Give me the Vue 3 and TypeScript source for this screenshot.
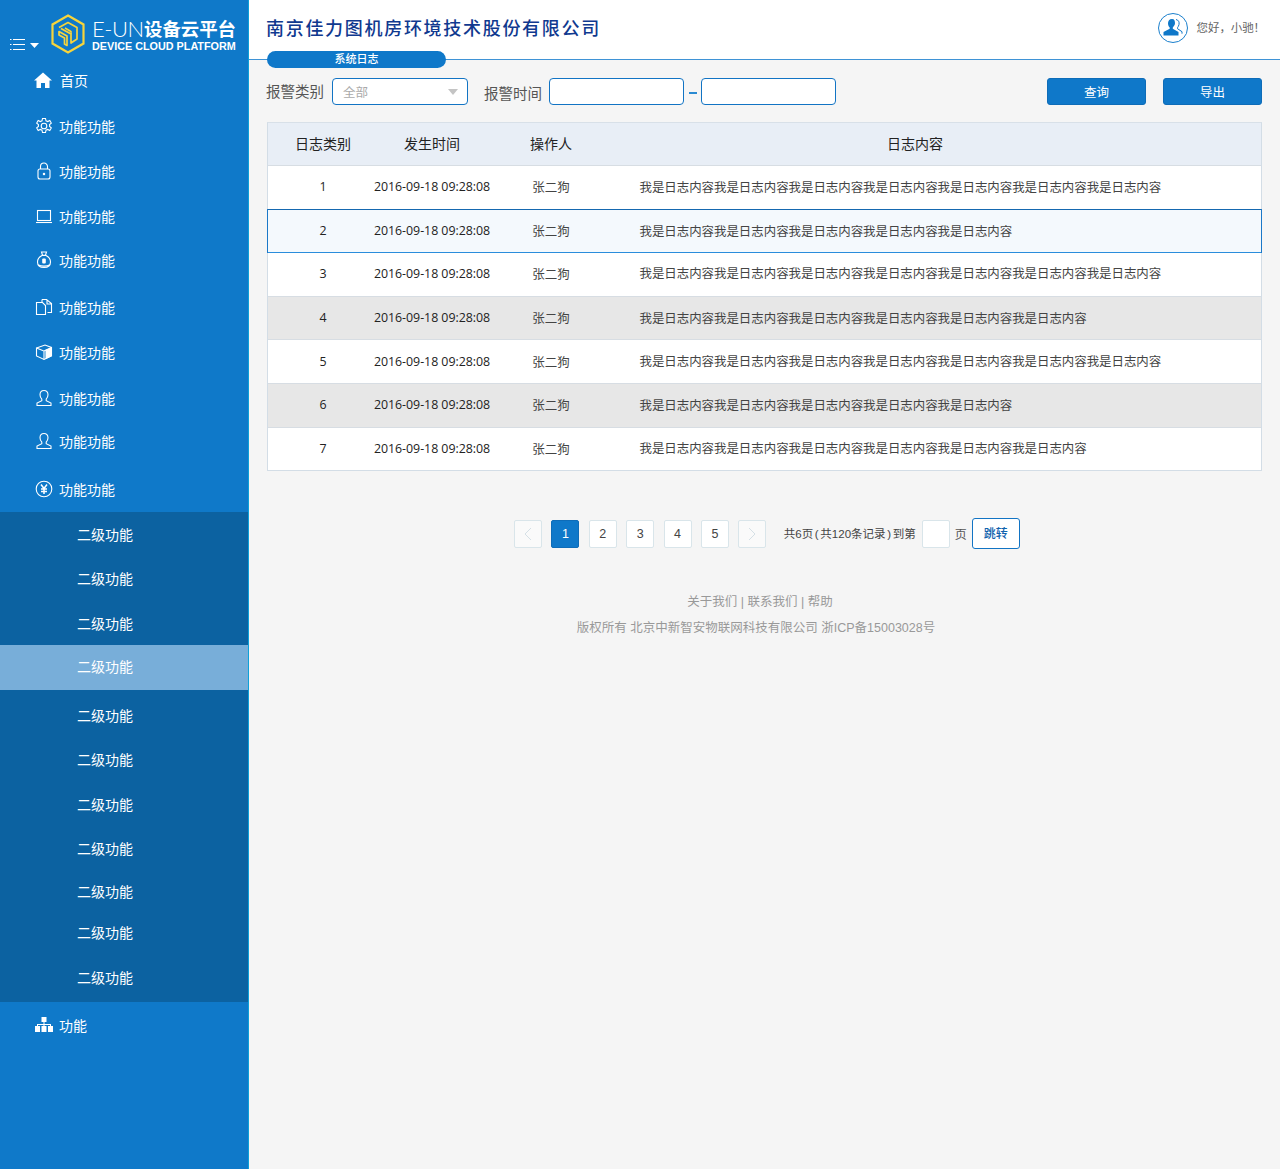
<script setup lang="ts">
const icons = ['gear', 'lock', 'laptop', 'bag', 'docs', 'box', 'user', 'user', 'yen']
const menuGaps = [0, 6, 5, 5, 4, 7, 5, 6, 3, 8]

const menu = icons.map((icon, i) => ({ icon, gap: menuGaps[i + 1] }))

const subGaps = [0, 4, 5, 1, 6, 4, 5, 4, 3, 1, 5]
const subItems = subGaps.map((gap, i) => ({ gap, active: i === 3 }))

const counts = [7, 5, 7, 6, 7, 5, 6]
const rows = counts.map((n, i) => ({
  id: i + 1,
  text: '我是日志内容'.repeat(n),
  grey: i === 3 || i === 5,
  selected: i === 1,
}))
</script>

<template>
  <div class="page">
    <aside class="sidebar">
      <div class="brand">
        <div class="burger">
          <svg width="30" height="14" viewBox="0 0 30 14">
            <path d="M0 1.500h1.500M3 1.500h12M0 6.500h1.500M3 6.500h12M0 11.500h1.500M3 11.500h12" stroke="#fff" stroke-width="1.200" fill="none" />
            <path d="M20 5h9l-4.500 5z" fill="#fff" />
          </svg>
        </div>
        <svg class="hex" width="34" height="40" viewBox="0 0 34 40">
          <path d="M17 1.500 32.500 10.500V29.500L17 38.500 1.500 29.500V10.500z" fill="none" stroke="#f6d43c" stroke-width="2.200" />
          <path d="M8 13.500 17 8.500 26 13.500V25L20 29V20L10 14.500M8 17.500 16 22V31.500L13.500 30V24L8 21z" fill="none" stroke="#f6d43c" stroke-width="1.700" stroke-linejoin="round" />
          <path d="M14 14 20 17.500V20" fill="none" stroke="#f6d43c" stroke-width="1.500" />
        </svg>
        <div class="brand-text">
          <div class="brand-top"><span class="brand-en">E-UN</span><span class="brand-cn">设备云平台</span></div>
          <div class="brand-sub">DEVICE CLOUD PLATFORM</div>
        </div>
      </div>

      <a class="menu-item home">
        <svg class="icon" width="18" height="16" viewBox="0 0 18 16">
          <path d="M9 .5 0 8.500h2.500V16H7v-5h4v5h4.500V8.500H18z" fill="#fff" />
        </svg>
        <span>首页</span>
      </a>

      <a v-for="(item, i) in menu" :key="i" class="menu-item" :style="{ marginTop: item.gap + 'px' }">
        <svg class="icon" width="18" height="18" viewBox="0 0 18 18" fill="none" stroke="#fff" stroke-width="1.100">
          <template v-if="item.icon === 'gear'">
            <circle cx="9" cy="9" r="2.800" />
            <path d="M7.500 1.500h3l.5 2.300 1.700.8 2.100-1.100 1.500 2.600-1.700 1.500v1.800l1.700 1.500-1.500 2.600-2.100-1.100-1.700.8-.5 2.300h-3l-.5-2.300-1.700-.8-2.100 1.100-1.500-2.600 1.700-1.500V7.600L1.700 6.100l1.500-2.600 2.100 1.100 1.700-.8z" />
          </template>
          <template v-else-if="item.icon === 'lock'">
            <rect x="3" y="7" width="12" height="10" rx="2" />
            <path d="M5.500 7V4.500a3.500 3.500 0 0 1 7 0V7" />
            <circle cx="9" cy="12" r=".7" fill="#fff" />
          </template>
          <template v-else-if="item.icon === 'laptop'">
            <rect x="2.500" y="3.500" width="13" height="10" />
            <path d="M1 15.500h16" />
          </template>
          <template v-else-if="item.icon === 'bag'">
            <path d="M6.500 1h5l-1 3.200h-3z" />
            <path d="M7 4.500C4 6 2.500 8.200 2.500 11c0 3.800 3 5.500 6.500 5.500s6.500-1.700 6.500-5.500c0-2.800-1.500-5-4.500-6.500z" />
            <rect x="7.200" y="7.500" width="3.600" height="5" rx="1" fill="#fff" stroke="none" />
            <path d="M3.500 14c2.500 1.500 8.500 1.500 11 0" />
          </template>
          <template v-else-if="item.icon === 'docs'">
            <path d="M1.500 4.500h6l3 3v9h-9z" />
            <path d="M7 1.500h4.500l5 4v9h-4M7 1.500v3M12 2v4h4" />
          </template>
          <template v-else-if="item.icon === 'box'">
            <path d="M1.500 5 10 2l6.500 2.500v8.500L9 16.500 1.500 13z" />
            <path d="M1.500 5 9 8v8.500M9 8l7.500-3.500" />
            <path d="M11 7.200l5-2.200v8l-5 2.300z" fill="#fff" />
          </template>
          <template v-else-if="item.icon === 'user'">
            <path d="M9 1.500c-2.500 0-4 1.800-4 4.300 0 2 .8 3.300 1.800 4.400v1.500L2 14v2.500h14V14l-4.800-2.300v-1.500C12.200 9.100 13 7.800 13 5.800c0-2.500-1.500-4.300-4-4.300z" />
          </template>
          <template v-else>
            <circle cx="9" cy="9" r="7.800" />
            <path d="M6 4.500 9 8.500l3-4M6 9h6M6 11.500h6M9 8.500V14" stroke-width="1.500" />
          </template>
        </svg>
        <span>功能功能</span>
      </a>

      <div class="submenu">
        <a v-for="(sub, i) in subItems" :key="i" class="sub-item" :class="{ active: sub.active }" :style="{ marginTop: sub.gap + 'px' }">二级功能</a>
      </div>

      <a class="menu-item last">
        <svg class="icon" width="18" height="16" viewBox="0 0 18 16" fill="#fff">
          <rect x="6.500" y="0" width="5" height="5" />
          <rect x="0" y="9" width="5" height="6" />
          <rect x="6.500" y="9" width="5" height="6" />
          <rect x="13" y="9" width="5" height="6" />
          <path d="M8.500 5h1v2H16v2h-1V8H9.500v1h-1V8H3v1H2V7h6.500z" />
        </svg>
        <span>功能</span>
      </a>
    </aside>

    <main class="main">
      <header class="topbar">
        <h1 class="company">南京佳力图机房环境技术股份有限公司</h1>
        <div class="greeting">
          <span class="avatar">
            <svg width="22" height="20" viewBox="0 0 22 20">
              <path d="M10 1c-2.700 0-4 2-4 4.300 0 1.800.7 3.200 1.700 4.200v1.300L1.500 14v3.500h15V14l-5.700-3.200V9.500C11.800 8.500 13 7 13 5.300 13 3 12.500 1 10 1z" fill="#0f78c9" />
              <path d="M14 1.500c2.500.5 3.500 2.500 3 5-.3 1.500-1 2.500-1.500 3.200v1l4.500 3v2" fill="none" stroke="#0f78c9" stroke-width="1" />
            </svg>
          </span>
          <span class="hello">您好，小驰！</span>
        </div>
        <div class="tab-pill">系统日志</div>
      </header>

      <div class="filters">
        <label class="filter-label">报警类别</label>
        <div class="select"><span>全部</span><i class="caret"></i></div>
        <label class="filter-label time-label">报警时间</label>
        <div class="field"></div>
        <span class="dash"></span>
        <div class="field"></div>
        <button class="btn first">查询</button>
        <button class="btn">导出</button>
      </div>

      <section class="table">
        <div class="row head">
          <div>日志类别</div>
          <div>发生时间</div>
          <div>操作人</div>
          <div class="head-content">日志内容</div>
        </div>
        <div
          v-for="row in rows"
          :key="row.id"
          class="row body-row"
          :class="{ grey: row.grey, selected: row.selected }"
        >
          <div class="num">{{ row.id }}</div>
          <div class="num">2016-09-18 09:28:08</div>
          <div class="who">张二狗</div>
          <div class="content">{{ row.text }}</div>
        </div>
      </section>

      <nav class="pager">
        <span class="page-btn arrow">
          <svg width="8" height="14" viewBox="0 0 8 14"><path d="M7 1 1 7l6 6" fill="none" stroke="#d5e0e6" /></svg>
        </span>
        <span class="page-btn current">1</span>
        <span class="page-btn">2</span>
        <span class="page-btn">3</span>
        <span class="page-btn">4</span>
        <span class="page-btn">5</span>
        <span class="page-btn arrow">
          <svg width="8" height="14" viewBox="0 0 8 14"><path d="m1 1 6 6-6 6" fill="none" stroke="#d5e0e6" /></svg>
        </span>
        <span class="page-info">共6页 ( 共120条记录 ) 到第</span>
        <span class="page-btn jump-input"></span>
        <span class="page-unit">页</span>
        <button class="jump">跳转</button>
      </nav>

      <footer class="footer">
        <p class="links">关于我们 | 联系我们 | 帮助</p>
        <p class="copy">版权所有 北京中新智安物联网科技有限公司 浙ICP备15003028号</p>
      </footer>
    </main>
  </div>
</template>

<style scoped>
.page {
  display: flex;
  min-height: 1169px;
  background: #f5f5f5;
  font-family: "Liberation Sans", "Noto Sans CJK SC", sans-serif;
}

.sidebar {
  width: 248px;
  flex-shrink: 0;
  background: #0f79c9;
  border-right: 1px solid #0ea0d8;
  color: #fff;
}

.brand {
  height: 59px;
  display: flex;
  align-items: flex-start;
  position: relative;
}

.burger {
  margin: 38px 0 0 10px;
  width: 40px;
  height: 14px;
  line-height: 0;
}

.hex {
  margin-top: 14px;
  margin-left: 1px;
}

.brand-text {
  margin-left: 7px;
  margin-top: 17px;
}

.brand-top {
  display: flex;
  align-items: center;
  height: 22px;
}

.brand-en {
  font-family: Lato, sans-serif;
  font-size: 22px;
  font-weight: 300;
  letter-spacing: -0.500px;
  width: 52px;
  white-space: nowrap;
}

.brand-cn {
  font-size: 18.400px;
  font-weight: 700;
}

.brand-sub {
  font-size: 10.800px;
  font-weight: 700;
  line-height: 14px;
  white-space: nowrap;
}

.menu-item {
  display: flex;
  align-items: center;
  height: 40px;
  padding-left: 35px;
  font-size: 14px;
  letter-spacing: 0;
}

.menu-item span {
  margin-left: 6px;
}

.icon {
  flex-shrink: 0;
}

.home {
  margin-top: 1px;
  padding-left: 34px;
}

.home span {
  margin-left: 8px;
}

.submenu {
  background: #0c62a1;
  margin-top: 3px;
  padding: 3px 0 4px;
}

.sub-item {
  display: block;
  height: 40px;
  line-height: 40px;
  padding-left: 77px;
  font-size: 14px;
}

.sub-item.active {
  height: 45px;
  line-height: 45px;
  background: #78aed9;
}

.last {
  margin-top: 3px;
}

.main {
  flex: 1;
  min-width: 0;
}

.topbar {
  position: relative;
  height: 59px;
  background: #fff;
  border-bottom: 1px solid #3f93d6;
  display: flex;
  justify-content: space-between;
  padding: 0 12px 0 17px;
  box-sizing: content-box;
}

.company {
  margin: 17px 0 0;
  font-size: 18px;
  line-height: 24px;
  font-weight: 500;
  letter-spacing: 1.700px;
  color: #10398f;
}

.greeting {
  display: flex;
  align-items: center;
  height: 30px;
  margin-top: 13px;
}

.avatar {
  width: 28px;
  height: 28px;
  border: 1px solid #1b80cd;
  border-radius: 50%;
  display: flex;
  align-items: center;
  justify-content: center;
}

.hello {
  margin: -1px 3px 1px 9px;
  font-size: 11.500px;
  letter-spacing: -0.100px;
  color: #666;
}

.tab-pill {
  position: absolute;
  left: 18px;
  top: 51px;
  width: 179px;
  height: 17px;
  line-height: 17px;
  border-radius: 9px;
  background: #0f78c9;
  color: #fff;
  font-size: 11px;
  font-weight: 500;
  text-align: center;
}

.filters {
  display: flex;
  align-items: center;
  height: 27px;
  margin: 18px 18px 0 17px;
}

.filter-label {
  font-size: 14.500px;
  color: #555;
  width: 58px;
  white-space: nowrap;
  padding-bottom: 2px;
}

.select {
  width: 136px;
  height: 27px;
  margin-left: 8px;
  box-sizing: border-box;
  border: 1px solid #1274c4;
  border-radius: 4px;
  background: #fff;
  display: flex;
  align-items: center;
  justify-content: space-between;
  padding: 0 9px 0 10px;
  font-size: 12.500px;
  color: #aaa;
}

.caret {
  width: 0;
  height: 0;
  border-left: 5px solid transparent;
  border-right: 5px solid transparent;
  border-top: 6px solid #c4c4c4;
}

.time-label {
  margin-left: 16px;
  padding-top: 2px;
  padding-bottom: 0;
}

.field {
  width: 135px;
  height: 27px;
  box-sizing: border-box;
  border: 1px solid #1274c4;
  border-radius: 4px;
  background: #fff;
}

.time-label + .field {
  margin-left: 7px;
}

.dash {
  width: 8px;
  height: 2px;
  margin: 2px 4.500px 0;
  background: #2a8ad2;
}

.btn {
  width: 99px;
  height: 27px;
  border: 1px solid #0e6cb8;
  border-radius: 3px;
  background: #0f78c9;
  color: #fff;
  font-family: inherit;
  font-size: 12.500px;
  padding: 0;
}

.first {
  margin-left: auto;
  margin-right: 17px;
}

.table {
  margin: 17px 18px 0 18px;
  border: 1px solid #d3dde6;
  border-top-color: #d8e0e8;
}

.row {
  display: grid;
  grid-template-columns: 104px 120px 118px 1fr;
  align-items: center;
  text-align: center;
  box-sizing: border-box;
  height: 43.600px;
  padding-bottom: 1px;
  background: #fff;
  border-top: 1px solid #d7dde3;
  color: #333;
}

.row > div:first-child {
  padding-left: 6px;
}

.head {
  height: 42px;
  padding-bottom: 2px;
  background: #e8eef6;
  border-top: 0;
  font-size: 14px;
  color: #222;
}

.head-content {
  padding-right: 41px;
}

.num {
  font-family: "Open Sans", "Noto Sans CJK SC", sans-serif;
  font-size: 12.400px;
  letter-spacing: -0.040px;
  color: #222;
  white-space: nowrap;
}

.who {
  font-size: 12.500px;
  color: #444;
}

.content {
  text-align: left;
  padding-left: 29.500px;
  font-size: 12.430px;
  color: #444;
  white-space: nowrap;
}

.grey {
  background: #e7e7e7;
}

.selected {
  height: 44.600px;
  margin-bottom: -1px;
  padding-bottom: 0;
  background: #f4f9fd;
  border-top: 1px solid #1568b0;
  border-bottom: 1px solid #2a8ddc;
  box-shadow: -1px 0 0 #1b78c8, 1px 0 0 #1b78c8;
  position: relative;
}

.selected + .row {
  border-top: 0;
}

.pager {
  display: flex;
  align-items: center;
  margin: 47px 0 0 265px;
  height: 31px;
}

.page-btn {
  width: 28px;
  height: 28px;
  box-sizing: border-box;
  border: 1px solid #d9e5ea;
  border-radius: 2px;
  background: #fff;
  margin-right: 9.400px;
  display: flex;
  align-items: center;
  justify-content: center;
  font-size: 12.500px;
  color: #444;
}

.current {
  background: #0f78c9;
  border-color: #0e6cb8;
  color: #fff;
}

.arrow {
  background: #fafafa;
}

.page-info {
  margin-left: 8px;
  width: 138px;
  padding-bottom: 2px;
  font-size: 11.500px;
  word-spacing: -1.500px;
  color: #444;
  white-space: nowrap;
}

.jump-input {
  margin-right: 5px;
}

.page-unit {
  font-size: 12px;
  color: #555;
  width: 17px;
}

.jump {
  width: 48px;
  height: 31px;
  border: 1px solid #1274c4;
  border-radius: 3px;
  background: #fff;
  color: #0f62ad;
  font-family: inherit;
  font-size: 12px;
  font-weight: 500;
  padding: 0 0 2px;
}

.footer {
  margin-top: 40px;
  padding-right: 17px;
  text-align: center;
  font-size: 12.500px;
  color: #999;
}

.footer p {
  margin: 0;
  line-height: 26px;
}

.links {
  padding-left: 8px;
}
</style>

<style>
body {
  background: #f5f5f5;
}
</style>
